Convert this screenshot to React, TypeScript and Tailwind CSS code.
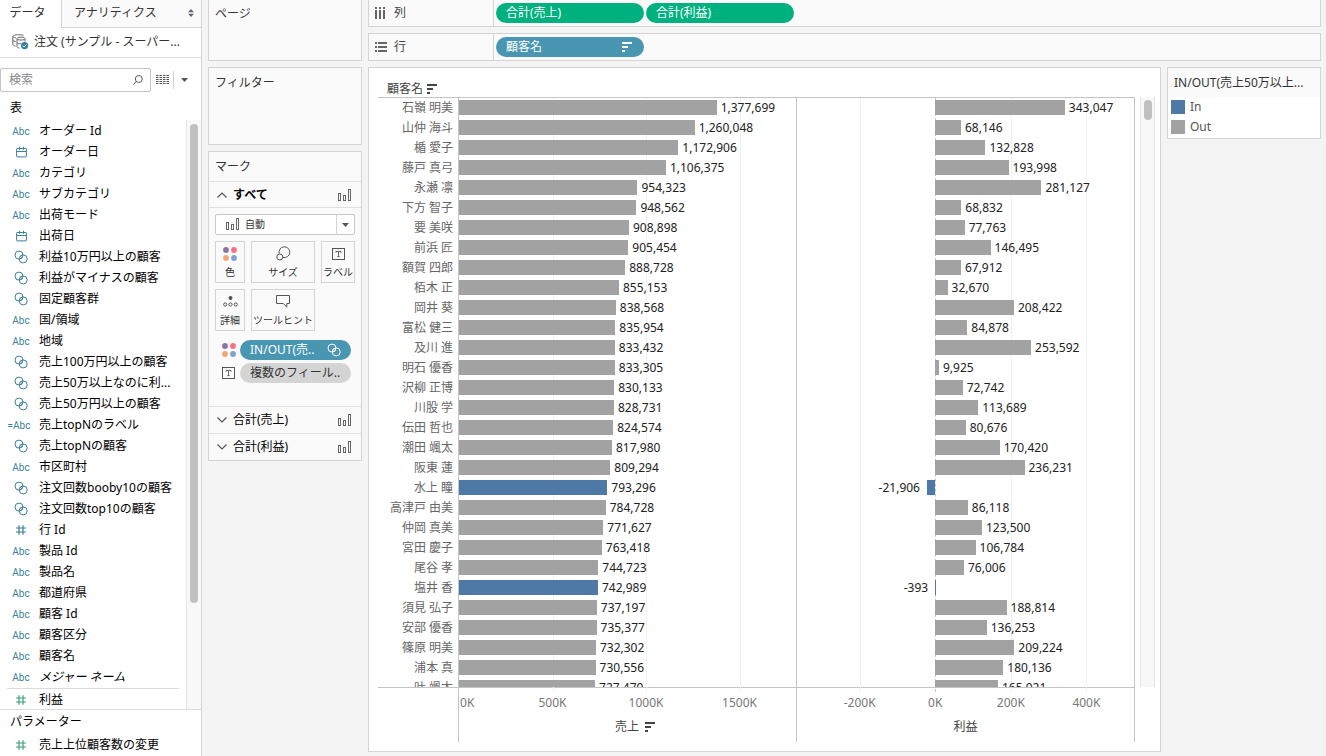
import React from 'react';

type FieldKind = 'abc' | 'date' | 'set' | 'calc' | 'num';

const fields: { kind: FieldKind; name: string; italic?: boolean }[] = [
  { kind: 'abc', name: 'オーダー Id' },
  { kind: 'date', name: 'オーダー日' },
  { kind: 'abc', name: 'カテゴリ' },
  { kind: 'abc', name: 'サブカテゴリ' },
  { kind: 'abc', name: '出荷モード' },
  { kind: 'date', name: '出荷日' },
  { kind: 'set', name: '利益10万円以上の顧客' },
  { kind: 'set', name: '利益がマイナスの顧客' },
  { kind: 'set', name: '固定顧客群' },
  { kind: 'abc', name: '国/領域' },
  { kind: 'abc', name: '地域' },
  { kind: 'set', name: '売上100万円以上の顧客' },
  { kind: 'set', name: '売上50万以上なのに利...' },
  { kind: 'set', name: '売上50万円以上の顧客' },
  { kind: 'calc', name: '売上topNのラベル' },
  { kind: 'set', name: '売上topNの顧客' },
  { kind: 'abc', name: '市区町村' },
  { kind: 'set', name: '注文回数booby10の顧客' },
  { kind: 'set', name: '注文回数top10の顧客' },
  { kind: 'num', name: '行 Id' },
  { kind: 'abc', name: '製品 Id' },
  { kind: 'abc', name: '製品名' },
  { kind: 'abc', name: '都道府県' },
  { kind: 'abc', name: '顧客 Id' },
  { kind: 'abc', name: '顧客区分' },
  { kind: 'abc', name: '顧客名' },
  { kind: 'abc', name: 'メジャー ネーム', italic: true },
];

const customers: { name: string; sales: number; profit: number }[] = [
  { name: '石嶺 明美', sales: 1377699, profit: 343047 },
  { name: '山仲 海斗', sales: 1260048, profit: 68146 },
  { name: '楯 愛子', sales: 1172906, profit: 132828 },
  { name: '藤戸 真弓', sales: 1106375, profit: 193998 },
  { name: '永瀬 凛', sales: 954323, profit: 281127 },
  { name: '下方 智子', sales: 948562, profit: 68832 },
  { name: '要 美咲', sales: 908898, profit: 77763 },
  { name: '前浜 匠', sales: 905454, profit: 146495 },
  { name: '額賀 四郎', sales: 888728, profit: 67912 },
  { name: '栢木 正', sales: 855153, profit: 32670 },
  { name: '岡井 葵', sales: 838568, profit: 208422 },
  { name: '富松 健三', sales: 835954, profit: 84878 },
  { name: '及川 進', sales: 833432, profit: 253592 },
  { name: '明石 優香', sales: 833305, profit: 9925 },
  { name: '沢柳 正博', sales: 830133, profit: 72742 },
  { name: '川股 学', sales: 828731, profit: 113689 },
  { name: '伝田 哲也', sales: 824574, profit: 80676 },
  { name: '潮田 颯太', sales: 817980, profit: 170420 },
  { name: '阪東 蓮', sales: 809294, profit: 236231 },
  { name: '水上 瞳', sales: 793296, profit: -21906 },
  { name: '高津戸 由美', sales: 784728, profit: 86118 },
  { name: '仲岡 真美', sales: 771627, profit: 123500 },
  { name: '宮田 慶子', sales: 763418, profit: 106784 },
  { name: '尾谷 孝', sales: 744723, profit: 76006 },
  { name: '塩井 香', sales: 742989, profit: -393 },
  { name: '須見 弘子', sales: 737197, profit: 188814 },
  { name: '安部 優香', sales: 735377, profit: 136253 },
  { name: '篠原 明美', sales: 732302, profit: 209224 },
  { name: '浦本 真', sales: 730556, profit: 180136 },
  { name: '叶 颯太', sales: 727479, profit: 165921 },
];

/* ---------- icons ---------- */

function SetIcon() {
  return (
    <svg width="14" height="14" viewBox="0 0 14 14" fill="none" stroke="currentColor" aria-hidden="true">
      <circle cx="5" cy="5.1" r="4" />
      <circle cx="9.2" cy="8.9" r="4" />
      <path d="M6 7.4 8.6 4.8M5.6 9.4 8.8 6.2" strokeWidth="0.7" />
    </svg>
  );
}

function DateIcon() {
  return (
    <svg width="11" height="12" viewBox="0 0 11 12" fill="none" stroke="currentColor" aria-hidden="true">
      <rect x="0.6" y="2.5" width="9.8" height="8.4" rx="0.6" />
      <path d="M0.6 5.5h9.8M3.5 0.8v3M7.5 0.8v3" />
    </svg>
  );
}

function NumIcon() {
  return (
    <svg width="10" height="10" viewBox="0 0 10 10" stroke="currentColor" strokeWidth="1.2" aria-hidden="true">
      <path d="M3 0.2v9.6M7 0.2v9.6M0 3h10M0 7h10" />
    </svg>
  );
}

function FieldIcon({ kind }: { kind: FieldKind }) {
  if (kind === 'set') return <SetIcon />;
  if (kind === 'date') return <DateIcon />;
  if (kind === 'num') return <NumIcon />;
  if (kind === 'calc') return <span className="-ml-1 pt-[2px] font-[Roboto] text-[10px]">=Abc</span>;
  return <span className="pt-[2px] font-[Roboto] text-[10px]">Abc</span>;
}

function BarsIcon() {
  return (
    <svg width="13" height="12" viewBox="0 0 13 12" fill="none" stroke="#666" aria-hidden="true">
      <rect x="0.5" y="4.5" width="2" height="7" />
      <rect x="5.5" y="6.5" width="2" height="5" />
      <rect x="10.5" y="0.5" width="2" height="11" />
    </svg>
  );
}

function SortIcon() {
  return (
    <svg width="11" height="10" viewBox="0 0 11 10" fill="currentColor" aria-hidden="true">
      <path d="M0 0h10v2H0zM0 4h6v2H0zM0 8h3v2H0z" />
    </svg>
  );
}

function ColorDots() {
  return (
    <svg width="14" height="14" viewBox="0 0 14 14" aria-hidden="true">
      <circle cx="3" cy="3" r="2.9" fill="#8c74a0" />
      <circle cx="11" cy="3" r="2.9" fill="#fb6f83" />
      <circle cx="3" cy="11" r="2.9" fill="#f3a673" />
      <circle cx="11" cy="11" r="2.9" fill="#7fa3cf" />
    </svg>
  );
}

function LabelIcon() {
  return (
    <svg width="13" height="12" viewBox="0 0 13 12" fill="none" stroke="#555" aria-hidden="true">
      <rect x="0.5" y="0.5" width="12" height="11" />
      <path d="M4 4.8V3.4h5v1.4M6.5 3.4v5.2M5.3 8.6h2.4" strokeWidth="0.9" />
    </svg>
  );
}

function SizeIcon() {
  return (
    <svg width="15" height="15" viewBox="0 0 15 15" fill="none" stroke="#555" aria-hidden="true">
      <path d="M3.2 7.6A5.4 5.4 0 1 1 7 11.4" />
      <circle cx="3.8" cy="11" r="3" />
    </svg>
  );
}

function DetailIcon() {
  return (
    <svg width="15" height="11" viewBox="0 0 15 11" fill="none" stroke="#555" aria-hidden="true">
      <circle cx="7.5" cy="2" r="2" fill="#555" stroke="none" />
      <circle cx="2.2" cy="8.5" r="1.6" />
      <circle cx="7.5" cy="8.5" r="1.6" />
      <circle cx="12.8" cy="8.5" r="1.6" />
    </svg>
  );
}

function TooltipIcon() {
  return (
    <svg width="14" height="13" viewBox="0 0 14 13" fill="none" stroke="#555" aria-hidden="true">
      <path d="M0.5 0.5h13v8h-2.7v3.6L7.3 8.5H0.5z" />
    </svg>
  );
}

function Chevron({ up }: { up?: boolean }) {
  return (
    <svg width="10" height="6" viewBox="0 0 10 6" fill="none" stroke="#555" strokeWidth="1.2" aria-hidden="true">
      <path d={up ? 'M0.5 5.5 5 1l4.5 4.5' : 'M0.5 0.5 5 5l4.5-4.5'} />
    </svg>
  );
}

function Caret() {
  return (
    <svg width="7" height="4" viewBox="0 0 7 4" fill="#555" aria-hidden="true">
      <path d="M0 0h7L3.5 4z" />
    </svg>
  );
}

/* ---------- data pane ---------- */

function FieldRow({ kind, name, italic, green }: { kind: FieldKind; name: string; italic?: boolean; green?: boolean }) {
  return (
    <li className="flex h-[21px] items-center">
      <span className={`flex w-[39px] shrink-0 items-center justify-center pl-[3px] ${green ? 'text-[#3aa076]' : 'text-[#3a7f9c]'}`}>
        <FieldIcon kind={kind} />
      </span>
      <span className={italic ? 'whitespace-nowrap italic' : 'whitespace-nowrap'}>{name}</span>
    </li>
  );
}

function DataPane() {
  return (
    <aside className="flex w-[202px] shrink-0 flex-col border-r border-[#d4d4d4] bg-white text-black">
      <div className="flex h-7 text-[#333]" role="tablist">
        <button role="tab" aria-selected="true" className="w-[61px] pb-[3px] pr-1.5">
          データ
        </button>
        <button
          role="tab"
          aria-selected="false"
          className="flex flex-1 items-center justify-between border-b border-l border-[#d4d4d4] bg-[#fafafa] pb-[2px] pl-3 pr-[7px]"
        >
          アナリティクス
          <svg width="6" height="8" viewBox="0 0 6 8" fill="#5c6670" aria-hidden="true">
            <path d="M0 3.2 3 0l3 3.2zM0 4.8h6L3 8z" />
          </svg>
        </button>
      </div>
      <div className="flex h-[30px] items-center gap-[5px] border-b border-[#e0e0e0] pb-[2px] pl-3 text-[#333]">
        <svg width="17" height="16" viewBox="0 0 17 16" fill="none" stroke="#666" aria-hidden="true">
          <path d="M11.5 1.5C9 .3 2 .3 .8 2.2v8.2c.4 1 1.5 1.500 2.800 1.700" />
          <path d="M.8 2.500c1 1 2.200 1.200 3.200 1.400M.8 6.400c.8.700 1.700 1 2.800 1.200" />
          <ellipse cx="9" cy="4.600" rx="4" ry="1.500" />
          <path d="M5 4.600v8c.3.800 1.300 1.300 2.500 1.500M13 4.600v3M5 8.600c.8 1 2.300 1.300 4 1.200" />
          <circle cx="12.600" cy="11.600" r="3.600" fill="#3a7f9c" stroke="none" />
          <path d="m10.900 11.700 1.300 1.300 2.200-2.500" stroke="#fff" />
        </svg>
        <span className="whitespace-nowrap">注文 (サンプル - スーパー...</span>
      </div>
      <div className="mt-2.5 flex h-6 items-center">
        <label className="flex h-6 w-[151px] items-center rounded-[2px] border border-[#c4c4c4] pl-2 pr-[7px]">
          <input
            type="text"
            aria-label="検索"
            placeholder="検索"
            className="min-w-0 flex-1 bg-transparent outline-none placeholder:text-[#8a8a8a]"
          />
          <svg width="10" height="10" viewBox="0 0 10 10" fill="none" stroke="#555" aria-hidden="true">
            <circle cx="5.800" cy="4" r="3.500" />
            <path d="M3.300 6.500.4 9.500" />
          </svg>
        </label>
        <button aria-label="表示" className="ml-[5px]">
          <svg width="13" height="10" viewBox="0 0 13 10" stroke="#555" aria-hidden="true">
            <path d="M0 .5h13M0 2.500h13M0 4.500h13M0 6.500h13M0 8.500h13" strokeDasharray="2.500 1" />
          </svg>
        </button>
        <span className="ml-1 h-[18px] w-px bg-[#d4d4d4]" />
        <button aria-label="メニュー" className="ml-[7px]">
          <Caret />
        </button>
      </div>
      <h2 className="h-7 shrink-0 pl-2.5 leading-8">表</h2>
      <div className="flex min-h-0 flex-1">
        <ul className="min-w-0 flex-1 overflow-hidden">
          {fields.map((f) => (
            <FieldRow key={f.name} {...f} />
          ))}
          <li aria-hidden="true" className="mx-[7px] mt-px h-px bg-[#dcdcdc]" />
          <FieldRow kind="num" name="利益" green />
        </ul>
        <div className="flex w-[15px] justify-center border-l border-[#e6e6e6] bg-[#f8f8f8] pt-1">
          <div className="h-[479px] w-2 rounded-full bg-[#c0c0c0]" />
        </div>
      </div>
      <div className="h-[47px] shrink-0 overflow-hidden border-t border-[#dcdcdc]">
        <h2 className="h-6 pl-2.5 leading-6">パラメーター</h2>
        <ul>
          <FieldRow kind="num" name="売上上位顧客数の変更" green />
        </ul>
      </div>
    </aside>
  );
}

/* ---------- cards ---------- */

function MarkButton({ icon, label }: { icon: React.ReactNode; label: string }) {
  return (
    <button className="flex h-[42px] flex-col items-center border border-[#d4d4d4] bg-[#fafafa] pt-[3px] text-[10px] leading-5 text-[#333]">
      <span className="flex h-[19px] items-center">{icon}</span>
      <span className="whitespace-nowrap">{label}</span>
    </button>
  );
}

function MarkHeader({ label }: { label: string }) {
  return (
    <button className="flex h-[27px] w-full items-center border-t border-[#e0e0e0] pl-2 pr-2.5 text-left text-black">
      <Chevron />
      <span className="ml-1.5 flex-1">{label}</span>
      <BarsIcon />
    </button>
  );
}

function Cards() {
  return (
    <div className="flex w-[154px] shrink-0 flex-col gap-1.5 text-[#333]">
      <section className="h-[61px] border border-t-0 border-[#d4d4d4] bg-[#fafafa] px-1.5 pt-1 leading-5">ページ</section>
      <section className="h-[78px] border border-[#d4d4d4] bg-[#fafafa] px-1.5 pt-1 leading-[22px]">フィルター</section>
      <section className="border border-[#d4d4d4] bg-[#fafafa]">
        <h2 className="h-[29px] px-1.5 leading-[30px]">マーク</h2>
        <button className="flex h-[27px] w-full items-center border-y border-[#e0e0e0] pl-2 pr-2.5 text-left font-bold text-black">
          <Chevron up />
          <span className="ml-1.5 flex-1">すべて</span>
          <BarsIcon />
        </button>
        <div className="px-1.5 pt-1.5">
          <div className="relative flex h-[21px]">
            <select
              aria-label="マークの種類"
              className="w-full appearance-none rounded-[2px] border border-[#c8c8c8] bg-white pl-[29px] text-[10px] text-[#333]"
            >
              <option>自動</option>
            </select>
            <span className="pointer-events-none absolute left-[11px] top-1">
              <BarsIcon />
            </span>
            <span className="pointer-events-none absolute inset-y-px right-px flex w-[18px] items-center justify-center border-l border-[#d4d4d4]">
              <Caret />
            </span>
          </div>
          <div className="mt-1.5 grid grid-cols-[30px_1fr_34px] gap-1.5">
            <MarkButton icon={<ColorDots />} label="色" />
            <MarkButton icon={<SizeIcon />} label="サイズ" />
            <MarkButton icon={<LabelIcon />} label="ラベル" />
            <MarkButton icon={<DetailIcon />} label="詳細" />
            <MarkButton icon={<TooltipIcon />} label="ツールヒント" />
          </div>
          <div className="mt-[9px] flex flex-col gap-[3px] pb-[23px] pr-1">
            <div className="flex items-center">
              <span className="flex w-[25px] justify-center pl-[2px]">
                <ColorDots />
              </span>
              <button className="flex h-5 flex-1 items-center justify-between whitespace-nowrap rounded-full bg-[#4996b2] pl-2.5 pr-2.5 text-white">
                IN/OUT(売.. <SetIcon />
              </button>
            </div>
            <div className="flex items-center">
              <span className="flex w-[25px] justify-center pl-[2px]">
                <LabelIcon />
              </span>
              <button className="flex h-5 flex-1 items-center whitespace-nowrap rounded-full bg-[#d4d4d4] pl-2.5">複数のフィール..</button>
            </div>
          </div>
        </div>
        <MarkHeader label="合計(売上)" />
        <MarkHeader label="合計(利益)" />
      </section>
    </div>
  );
}

/* ---------- chart ---------- */

interface PaneProps {
  title: string;
  sorted?: boolean;
  min: number;
  max: number;
  ticks: number[];
  measure: 'sales' | 'profit';
}

function ChartPane({ title, sorted, min, max, ticks, measure }: PaneProps) {
  const pct = (v: number) => ((v - min) / (max - min)) * 100;
  return (
    <div className="relative flex min-w-0 flex-col border-l border-[#c4c4c4]">
      <div className="pointer-events-none absolute inset-x-0 bottom-[50px] top-0">
        {ticks.map((t) =>
          t === 0 ? (
            min < 0 && (
              <div key={t} className="absolute inset-y-0 w-px border-l border-dashed border-[#c4c4c4]" style={{ left: `${pct(t)}%` }} />
            )
          ) : (
            <div key={t} className="absolute inset-y-0 w-px bg-[#f0f0f0]" style={{ left: `${pct(t)}%` }} />
          ),
        )}
      </div>
      <div className="relative min-h-0 flex-1 overflow-hidden">
        {customers.map((c) => {
          const v = c[measure];
          const start = pct(Math.min(0, v));
          const width = pct(Math.max(0, v)) - start;
          const text = v.toLocaleString('en-US');
          return (
            <div key={c.name} className="flex h-5 pt-[2px] leading-4 text-[#222]">
              <span className="shrink-0 pr-[7px] text-right" style={{ width: `${start}%`, padding: start === 0 ? 0 : undefined }}>
                {v < 0 && text}
              </span>
              <span
                className={`h-[15px] min-w-px shrink-0 ${c.profit < 0 ? 'bg-[#4e79a7]' : 'bg-[#a2a2a2]'}`}
                style={{ width: `${width}%` }}
              />
              {v >= 0 && <span className="pl-1">{text}</span>}
            </div>
          );
        })}
      </div>
      <div className="h-[55px] shrink-0 border-t border-[#c4c4c4]">
        <div className="relative h-[30px] leading-[30px] text-[#777]">
          {ticks.map((t) => (
            <span
              key={t}
              className={t === min ? 'absolute left-px' : 'absolute -translate-x-1/2'}
              style={t === min ? undefined : { left: `${pct(t)}%` }}
            >
              {t / 1000}K
            </span>
          ))}
        </div>
        <div className={`flex items-center justify-center gap-1.5 leading-[18px] text-[#444] ${sorted ? 'pl-4' : ''}`}>
          {title}
          {sorted && <SortIcon />}
        </div>
      </div>
    </div>
  );
}

function Viz() {
  return (
    <section className="flex min-w-0 flex-1 flex-col border border-[#d4d4d4] bg-white pb-[9px] pl-[9px] pr-[5px]">
      <div className="flex h-[29px] shrink-0 items-center gap-1 pl-[9px] pt-3 text-[#444]">
        顧客名 <SortIcon />
      </div>
      <div className="flex min-h-0 flex-1 gap-[5px]">
        <div className="grid min-w-0 flex-1 grid-cols-[80px_1fr_1fr] grid-rows-[minmax(0,1fr)] border-r border-t border-[#c4c4c4]">
          <div className="flex flex-col">
            <ul className="min-h-0 flex-1 overflow-hidden pr-[5px] text-right leading-5 text-[#666]">
              {customers.map((c) => (
                <li key={c.name} className="h-5">
                  {c.name}
                </li>
              ))}
            </ul>
            <div className="h-[55px] shrink-0 border-t border-[#c4c4c4]" />
          </div>
          <ChartPane title="売上" sorted min={0} max={1802000} ticks={[0, 500000, 1000000, 1500000]} measure="sales" />
          <ChartPane title="利益" min={-366000} max={526000} ticks={[-200000, 0, 200000, 400000]} measure="profit" />
        </div>
        <div className="mb-[55px] flex w-[15px] justify-center border-x border-[#e6e6e6] bg-[#f8f8f8] pt-[3px]">
          <div className="h-5 w-2 rounded-full bg-[#c0c0c0]" />
        </div>
      </div>
    </section>
  );
}

function Legend() {
  return (
    <section className="w-[154px] self-start border border-[#d4d4d4] bg-white text-[#333]">
      <h2 className="h-[29px] whitespace-nowrap bg-[#fafafa] pl-1.5 leading-[30px]">IN/OUT(売上50万以上...</h2>
      <ul className="flex flex-col pb-px pl-[3px] leading-[22px] text-[#555]">
        <li className="flex h-5 items-center gap-[5px]">
          <span className="size-3.5 bg-[#4e79a7]" />
          In
        </li>
        <li className="flex h-5 items-center gap-[5px]">
          <span className="size-3.5 bg-[#a2a2a2]" />
          Out
        </li>
      </ul>
    </section>
  );
}

export default function App() {
  return (
    <div className="flex h-screen overflow-hidden bg-[#f4f4f4] font-['Noto_Sans','Noto_Sans_CJK_JP',sans-serif] text-xs">
      <DataPane />
      <div className="flex min-w-0 flex-1 gap-1.5 pl-1.5 pr-[5px]">
        <Cards />
        <main className="flex min-w-0 flex-1 flex-col gap-1.5 pb-1">
          <section className="flex h-[27px] shrink-0 border border-t-0 border-[#d4d4d4] bg-[#fafafa]">
            <h2 className="flex w-[125px] items-center gap-2 border-r border-[#d4d4d4] pl-1.5 text-[#444]">
              <svg width="11" height="12" viewBox="0 0 11 12" fill="#666" aria-hidden="true">
                <path d="M0 0h2v2H0zM4 0h2v2H4zM8 0h2v2H8zM0 3h2v9H0zM4 3h2v9H4zM8 3h2v9H8z" />
              </svg>
              列
            </h2>
            <div className="flex gap-[2px] pl-[2px] pt-[3px] text-white">
              <button className="h-5 w-[148px] rounded-full bg-[#00b180] pl-2.5 text-left">合計(売上)</button>
              <button className="h-5 w-[148px] rounded-full bg-[#00b180] pl-2.5 text-left">合計(利益)</button>
            </div>
          </section>
          <section className="flex h-[28px] shrink-0 border border-[#d4d4d4] bg-[#fafafa]">
            <h2 className="flex w-[125px] items-center gap-[7px] border-r border-[#d4d4d4] pl-1.5 text-[#444]">
              <svg width="12" height="10" viewBox="0 0 12 10" fill="#666" aria-hidden="true">
                <path d="M0 0h2v2H0zM3 0h9v2H3zM0 4h2v2H0zM3 4h9v2H3zM0 8h2v2H0zM3 8h9v2H3z" />
              </svg>
              行
            </h2>
            <div className="pl-[2px] pt-[3px] text-white">
              <button className="flex h-5 w-[148px] items-center justify-between rounded-full bg-[#4996b2] pl-2.5 pr-[11px]">
                顧客名 <SortIcon />
              </button>
            </div>
          </section>
          <div className="flex min-h-0 flex-1 gap-1.5">
            <Viz />
            <Legend />
          </div>
        </main>
      </div>
    </div>
  );
}
